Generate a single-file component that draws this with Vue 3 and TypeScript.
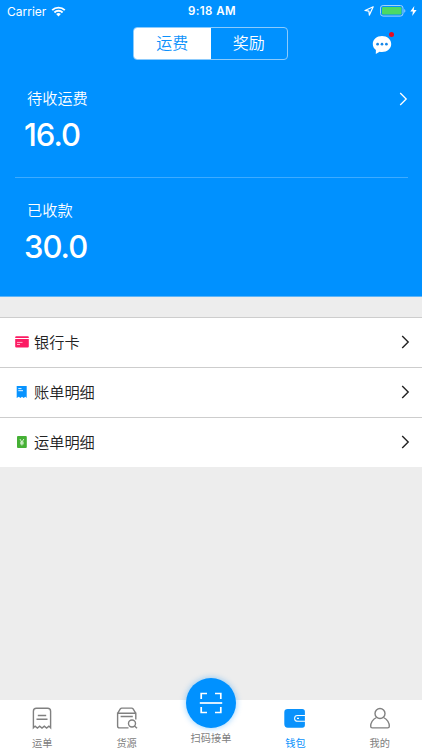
<script setup lang="ts">
import { ref } from 'vue'

type Kind = 'card' | 'bill' | 'waybill'
const segments = ['运费', '奖励']
const activeSegment = ref(0)
const rows: { kind: Kind; label: string }[] = [
  { kind: 'card', label: '银行卡' },
  { kind: 'bill', label: '账单明细' },
  { kind: 'waybill', label: '运单明细' },
]
const tabs = [
  { id: 'orders', label: '运单' },
  { id: 'goods', label: '货源' },
  { id: 'scan', label: '扫码接单' },
  { id: 'wallet', label: '钱包' },
  { id: 'me', label: '我的' },
]
const activeTab = ref('wallet')
</script>

<template>
  <div class="screen">
    <header class="hero">
      <div class="status">
        <div class="status-left">
          <span class="carrier">Carrier</span>
          <svg class="wifi" width="15" height="11" viewBox="0 0 14 11">
            <path d="M.7 4.200a8.900 8.900 0 0 1 12.600 0M2.900 6.500a5.800 5.800 0 0 1 8.200 0" fill="none" stroke="#fff" stroke-width="1.900" />
            <path d="M7 10.500 4.600 8.100a3.400 3.400 0 0 1 4.800 0z" fill="#fff" />
          </svg>
        </div>
        <span class="time">9:18 AM</span>
        <div class="status-right">
          <svg width="10" height="10" viewBox="0 0 10 10">
            <path d="M9.200.8 1 4.500l3.900.6.500 4z" fill="none" stroke="#fff" stroke-width="1.200" stroke-linejoin="round" />
          </svg>
          <svg class="battery" width="26" height="12" viewBox="0 0 26 12">
            <rect x=".5" y=".5" width="22.500" height="10.600" rx="2.600" fill="none" stroke="#a3d3fd" />
            <rect x="2" y="2" width="19.500" height="7.600" rx="1.200" fill="#4cd964" />
            <path d="M24.300 4v3.800c1.400-.5 1.400-3.300 0-3.800z" fill="#a3d3fd" />
          </svg>
          <svg width="7" height="10" viewBox="0 0 7 10">
            <path d="M4.300 0 .3 5.500h2.600L2.200 10l4.400-5.900H3.800z" fill="#fff" />
          </svg>
        </div>
      </div>

      <nav class="topbar">
        <div class="segmented">
          <button
            v-for="(name, i) in segments"
            :key="name"
            class="segment"
            :class="{ selected: i === activeSegment }"
            @click="activeSegment = i"
          >{{ name }}</button>
        </div>
        <div class="messages">
          <svg width="20" height="20" viewBox="0 0 20 20">
            <path d="M10 1C4.800 1 .8 4.500.8 9c0 2.500 1.200 4.600 3.100 6.100L3.800 19l3.800-2.300c.8.2 1.600.3 2.400.3 5.200 0 9.200-3.500 9.200-8S15.200 1 10 1z" fill="#fff" />
            <circle cx="5.600" cy="9.200" r="1.350" fill="#1687e8" />
            <circle cx="10" cy="9.200" r="1.350" fill="#1687e8" />
            <circle cx="14.400" cy="9.200" r="1.350" fill="#1687e8" />
          </svg>
          <i class="dot"></i>
        </div>
      </nav>

      <section class="balance pending">
        <div class="balance-head">
          <span>待收运费</span>
          <svg width="9" height="14" viewBox="0 0 9 14">
            <path d="M1.200 1l6 6-6 6" fill="none" stroke="#fff" stroke-width="1.300" />
          </svg>
        </div>
        <div class="amount">16.0</div>
      </section>
      <section class="balance received">
        <div class="balance-head"><span>已收款</span></div>
        <div class="amount">30.0</div>
      </section>
    </header>

    <main class="content">
      <ul class="list">
        <li v-for="row in rows" :key="row.kind" class="row">
          <svg class="row-icon" width="14" height="14" viewBox="0 0 14 14">
            <g v-if="row.kind === 'card'">
              <path d="M1.200 1.200h11.600q1 0 1 1v.7H.2v-.7q0-1 1-1zM.2 4.100h13.600v7.500q0 1-1 1H1.200q-1 0-1-1z" fill="#fc1b63" />
              <path d="M2 7.400h5.500M2 9.500h3" stroke="#ffc0d3" stroke-width=".9" />
            </g>
            <g v-else-if="row.kind === 'bill'">
              <path d="M1.700 1h10v12l-1.400-1.200L8.700 13 7 11.800 5.400 13l-1.600-1.200L1.700 13z" fill="#0793ff" />
              <path d="M3.300 3.600h3.200M3.300 5.700h4.700" stroke="#fff" stroke-width=".9" />
            </g>
            <g v-else>
              <rect x="2" y="1" width="9.800" height="12" rx="1" fill="#45b035" />
              <path d="m4.900 4 2 3 2-3M6.900 7v3.500M5 7.200h3.800M5 8.800h3.800" fill="none" stroke="#e4f6e0" stroke-width=".9" />
            </g>
          </svg>
          <span class="row-label">{{ row.label }}</span>
          <svg width="9" height="14" viewBox="0 0 9 14">
            <path d="M1.200 1l6 6-6 6" fill="none" stroke="#222" stroke-width="1.400" />
          </svg>
        </li>
      </ul>
    </main>

    <footer class="tabbar">
      <div
        v-for="tab in tabs"
        :key="tab.id"
        class="tab"
        :class="{ active: tab.id === activeTab, scan: tab.id === 'scan' }"
        @click="activeTab = tab.id"
      >
        <div v-if="tab.id === 'scan'" class="scan-button">
          <svg width="24" height="24" viewBox="0 0 24 24" fill="none" stroke="#fff" stroke-width="1.700">
            <path d="M2.200 8V2.500H8M16 2.500h5.800V8M2.200 16v5.500H8M16 21.500h5.800V16" />
            <path d="M.8 12h22.400" />
          </svg>
        </div>
        <svg v-else class="tab-icon" width="24" height="24" viewBox="0 0 24 24" fill="none" stroke="#808080" stroke-width="1.400">
          <g v-if="tab.id === 'orders'">
            <path d="M3.400 21.800V5.200q0-3 3-3h11.200q3 0 3 3v16.600l-1.700-1.700-2.300 2-2.300-2-2.300 2-2.300-2-2.300 2-2.300-2z" />
            <path d="M7.800 9.500h8.400M6.500 13.300h11" />
          </g>
          <g v-else-if="tab.id === 'goods'">
            <path d="M20.800 13.500V7.300H2.600v12.600q0 2 2 2h8.900M2.600 7.300l2.700-4.400q.5-.8 1.500-.8h9.800q1 0 1.500.8l2.700 4.400M5.600 10.500h12.200" />
            <circle cx="17" cy="17.500" r="3.500" />
            <path d="m19.500 20 2.500 2.300" />
          </g>
          <g v-else-if="tab.id === 'wallet'" stroke="none">
            <path d="M4.800 3h14.400q2.700 0 2.700 2.500V9H14.500a3.400 3.400 0 0 0 0 6.800h7.400V19q0 2.700-2.700 2.700H4.800Q1.300 21.700 1.300 18V6.300Q1.300 3 4.800 3z" fill="#0a92fc" />
            <path d="M14.500 10h7.400v4.800h-7.400a2.400 2.400 0 0 1 0-4.800z" fill="#0a92fc" />
            <path d="M14 12.400h2" stroke="#fff" stroke-width="1.200" />
          </g>
          <g v-else>
            <circle cx="12" cy="7.500" r="5" />
            <path d="M8.500 11.500C4.700 13.500 2.700 17 2.700 20.300q0 1.600 1.600 1.600h15.400q1.600 0 1.600-1.600c0-3.300-2-6.800-5.800-8.800" />
          </g>
        </svg>
        <span class="tab-label">{{ tab.label }}</span>
      </div>
    </footer>
  </div>
</template>

<style>
body { margin: 0; }
</style>

<style scoped>
.screen {
  display: flex;
  flex-direction: column;
  width: 100%;
  height: 750px;
  overflow: hidden;
  background: #ededed;
  font-family: Inter, 'Noto Sans CJK SC', sans-serif;
}
.hero {
  box-sizing: border-box;
  height: 297px;
  background: #0091ff;
  border-bottom: 1px solid #5eb5f8;
  color: #fff;
}
.status {
  display: grid;
  grid-template-columns: 1fr auto 1fr;
  align-items: center;
  height: 22px;
  padding: 0 5px 0 7px;
  font-size: 12px;
}
.status-left, .status-right { display: flex; align-items: center; }
.status-left { gap: 5px; }
.status-right { justify-content: flex-end; gap: 4px; }
.battery { margin-left: 2px; }
.time { font-weight: 600; font-size: 11.500px; letter-spacing: 0.400px; }
.topbar {
  display: grid;
  grid-template-columns: 133px 155px 1fr;
  align-items: center;
  height: 42px;
}
.segmented {
  grid-column: 2;
  box-sizing: border-box;
  display: flex;
  height: 33px;
  border: 1px solid #8ccbfc;
  border-radius: 4px;
  overflow: hidden;
}
.segment {
  flex: 1;
  padding: 0;
  border: 0;
  background: transparent;
  color: #fff;
  font: 350 16px/31px Inter, 'Noto Sans CJK SC', sans-serif;
}
.segment.selected { background: #fff; color: #0b91fb; }
.messages {
  grid-column: 3;
  position: relative;
  display: flex;
  justify-self: end;
  margin: 4px 30px 0 0;
}
.dot {
  position: absolute;
  top: -3px;
  right: -2px;
  width: 5px;
  height: 5px;
  border-radius: 50%;
  background: #e60b22;
}
.balance { margin: 0 14px 0 15px; }
.pending {
  box-sizing: border-box;
  height: 114px;
  padding-top: 24px;
  border-bottom: 1px solid #3eabff;
}
.received { padding-top: 22px; }
.balance-head {
  display: flex;
  align-items: center;
  justify-content: space-between;
  height: 22px;
  padding-left: 12px;
  font-size: 15.200px;
  font-weight: 350;
  line-height: 22px;
}
.amount {
  height: 48px;
  padding-left: 9px;
  font-size: 31px;
  font-weight: 500;
  letter-spacing: -1px;
  line-height: 50px;
}
.content { flex: 1; padding-top: 20px; }
.list { margin: 0; padding: 0; list-style: none; background: #fff; }
.row {
  box-sizing: border-box;
  display: flex;
  align-items: center;
  height: 50px;
  padding: 0 12px 1px 15px;
  border-top: 1px solid #cdcdcd;
}
.row-label {
  flex: 1;
  margin-left: 5px;
  padding-top: 2px;
  color: #222;
  font-size: 15.200px;
  font-weight: 350;
  line-height: 22px;
}
.tabbar {
  display: grid;
  grid-template-columns: repeat(5, 1fr);
  height: 50px;
  background: #fff;
}
.tab {
  display: flex;
  flex-direction: column;
  align-items: center;
  color: #808080;
}
.tab.active { color: #0a92fc; }
.tab-icon { margin-top: 6px; }
.tab-label { margin-top: 6px; font-size: 10.200px; line-height: 14px; }
.scan-button {
  display: flex;
  align-items: center;
  justify-content: center;
  flex: none;
  width: 50px;
  height: 50px;
  margin-top: -22px;
  border-radius: 50%;
  background: #0091ff;
  box-shadow: 0 0 6px rgba(0, 145, 255, 0.450);
}
.scan .tab-label { margin-top: 3px; }
</style>
